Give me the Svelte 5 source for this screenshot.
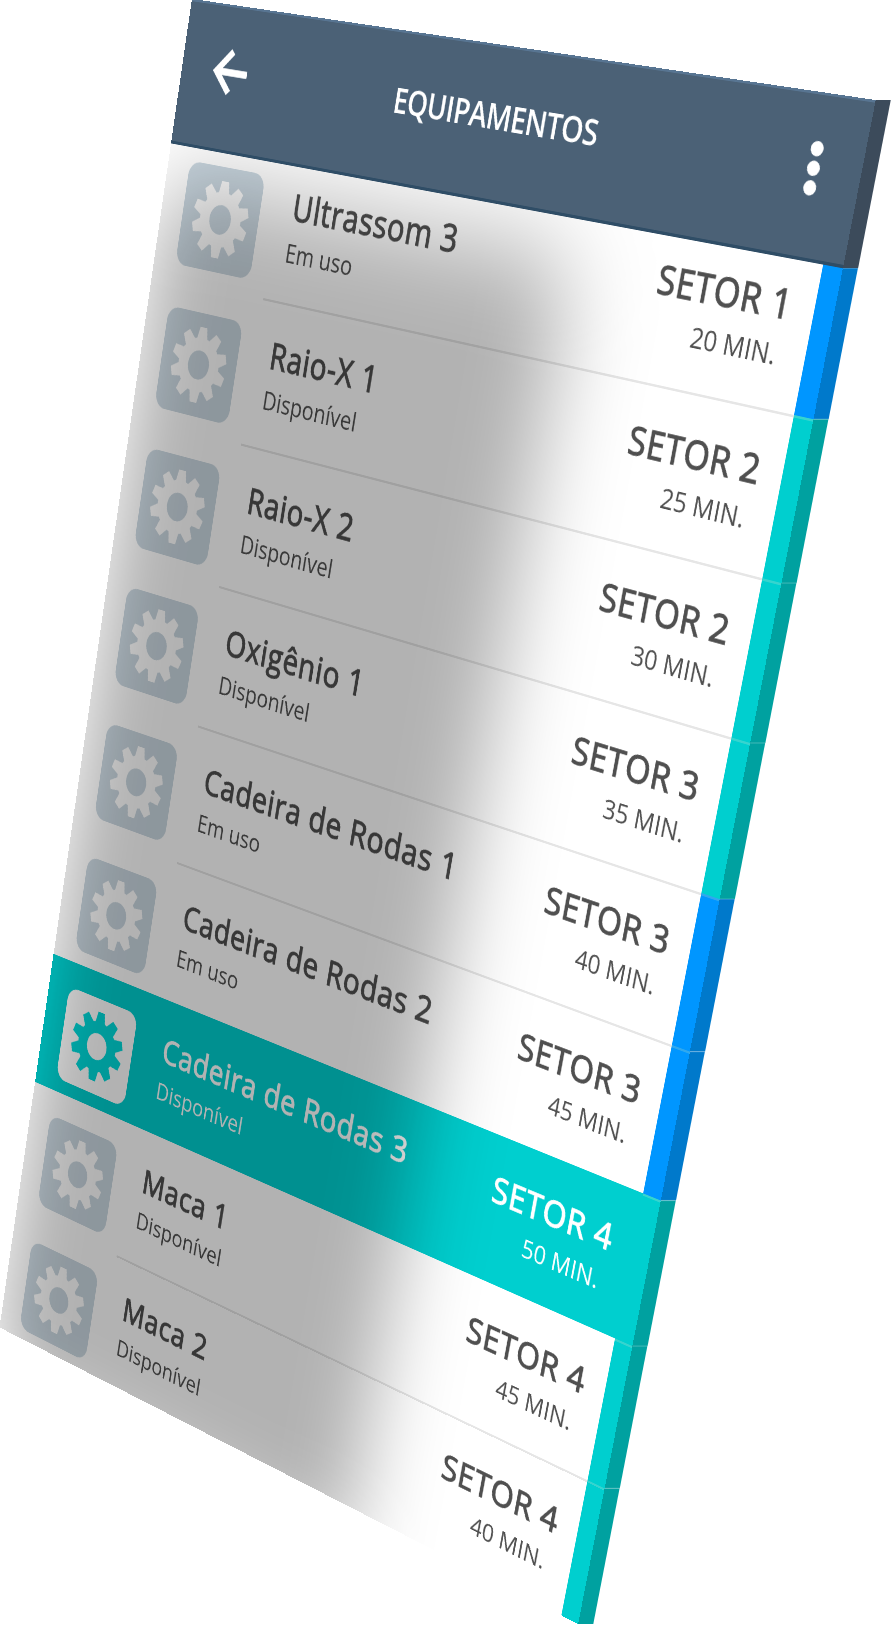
<script>
  const W = 1112;
  const HEAD = 196;
  const LIST = 1775;

  const rows = [
    { name: 'Ultrassom 3', state: 'Em uso', sector: 'SETOR 1', time: '20 MIN.', busy: true },
    { name: 'Raio-X 1', state: 'Disponível', sector: 'SETOR 2', time: '25 MIN.' },
    { name: 'Raio-X 2', state: 'Disponível', sector: 'SETOR 2', time: '30 MIN.' },
    { name: 'Oxigênio 1', state: 'Disponível', sector: 'SETOR 3', time: '35 MIN.' },
    { name: 'Cadeira de Rodas 1', state: 'Em uso', sector: 'SETOR 3', time: '40 MIN.', busy: true },
    { name: 'Cadeira de Rodas 2', state: 'Em uso', sector: 'SETOR 3', time: '45 MIN.', busy: true },
    { name: 'Cadeira de Rodas 3', state: 'Disponível', sector: 'SETOR 4', time: '50 MIN.', selected: true },
    { name: 'Maca 1', state: 'Disponível', sector: 'SETOR 4', time: '45 MIN.' },
    { name: 'Maca 2', state: 'Disponível', sector: 'SETOR 4', time: '40 MIN.' }
  ];

  // Perspective of the panel: the four corners of the list area on the page.
  const [A, B, C, D] = [[171, 143.4], [842.9, 268.3], [578.1, 1624], [-0.5, 1327.4]];
  const d1 = [B[0] - C[0], B[1] - C[1]];
  const d2 = [D[0] - C[0], D[1] - C[1]];
  const s = [A[0] - B[0] + C[0] - D[0], A[1] - B[1] + C[1] - D[1]];
  const det = d1[0] * d2[1] - d2[0] * d1[1];
  const g = (s[0] * d2[1] - d2[0] * s[1]) / det;
  const h = (d1[0] * s[1] - s[0] * d1[1]) / det;
  const line = (p, q, r) => [(q * (1 + g) - p) / W, (r * (1 + h) - p) / LIST, p];
  const mx = line(A[0], B[0], D[0]);
  const my = line(A[1], B[1], D[1]);
  const mw = [g / W, h / LIST, 1];
  for (const m of [mx, my, mw]) m[2] -= m[1] * HEAD;
  const matrix = `matrix3d(${[mx[0], my[0], 0, mw[0], mx[1], my[1], 0, mw[1], 0, 0, 1, 0, mx[2], my[2], 0, mw[2]].join(',')})`;

  // Thickness of the panel, seen along its right edge.
  const edge = (y) => {
    const w = mw[0] * W + mw[1] * y + mw[2];
    return [(mx[0] * W + mx[1] * y + mx[2]) / w, (my[0] * W + my[1] * y + my[2]) / w];
  };
  const side = (y0, y1) => {
    const [x0, a] = edge(y0);
    const [x1, b] = edge(y1);
    return `${x0 - 0.6},${a} ${x0 + 15},${a} ${x1 + 15.2},${b} ${x1 - 0.6},${b}`;
  };
  const cuts = [HEAD, 376, 576, 776, 976, 1176, 1376, 1576, 1776, HEAD + LIST];
  const seams = cuts.slice(1, -1).map(edge);

  const teeth = Array.from({ length: 10 }, (_, i) => i * 36);
</script>

<main>
  <svg class="side" width="891" height="1625" viewBox="0 0 891 1625">
    <polygon points={side(0, HEAD)} fill="#3c4b5b" />
    {#each rows as row, i}
      <polygon points={side(cuts[i], cuts[i + 1])} fill={row.busy ? '#0079cb' : '#00a1a0'} />
    {/each}
    {#each seams as [x, y]}
      <line x1={x} y1={y} x2={x + 15} y2={y} stroke="#ffffff" stroke-opacity="0.2" stroke-width="1.3" />
    {/each}
  </svg>

  <div class="panel" style:transform={matrix}>
    <header>
      <svg class="back" viewBox="0 0 64 64" width="64" height="64">
        <path d="M63 33H7M33 5L6 33l27 27" fill="none" stroke="#fff" stroke-width="9.5" />
      </svg>
      <h1>EQUIPAMENTOS</h1>
      <div class="menu"><i></i><i></i><i></i></div>
    </header>

    <div class="list">
      {#each rows as row}
        <div class="row" class:selected={row.selected}>
          <div class="icon">
            <svg viewBox="-71.5 -71 142 142" width="142" height="142">
              <g class="gear">
                {#each teeth as angle}
                  <path d="M-10 -34L-6.5 -52H6.5L10 -34Z" transform="rotate({angle})" />
                {/each}
                <path fill-rule="evenodd" d="M0 -38a38 38 0 1 1 0 76a38 38 0 1 1 0 -76ZM0 -20a20 20 0 1 0 0 40a20 20 0 1 0 0 -40Z" />
              </g>
            </svg>
          </div>
          <div class="content">
            <div class="left">
              <strong>{row.name}</strong>
              <span>{row.state}</span>
            </div>
            <div class="right">
              <strong>{row.sector}</strong>
              <span>{row.time}</span>
            </div>
          </div>
          <div class="bar" class:busy={row.busy}></div>
        </div>
      {/each}
      <div class="shade"></div>
    </div>
  </div>
</main>

<style>
  :global(body) { background: #fff; }
  main {
    position: relative;
    width: 891px;
    height: 1625px;
    overflow: hidden;
    font-family: 'Open Sans', 'Noto Sans', sans-serif;
  }
  .side { position: absolute; inset: 0; }
  .panel {
    position: absolute;
    left: 0;
    top: 0;
    width: 1112px;
    height: 1971px;
    transform-origin: 0 0;
    background: #fff;
  }
  header {
    box-sizing: border-box;
    height: 196px;
    padding: 0 58px 20px 59px;
    display: flex;
    align-items: center;
    justify-content: space-between;
    background: #4b6176;
    border-top: 3px solid #587592;
    border-bottom: 4px solid #2f4d66;
    color: #fff;
  }
  h1 {
    margin: 1px 0 0 -5px;
    font-size: 44.5px;
    line-height: 60px;
    font-weight: 600;
    letter-spacing: -1px;
  }
  .menu {
    width: 64px;
    display: flex;
    flex-direction: column;
    align-items: flex-end;
    gap: 5px;
  }
  .menu i { width: 18px; height: 18px; border-radius: 50%; background: #fff; }
  .list { position: relative; height: 1775px; overflow: hidden; }
  .row { display: flex; height: 200px; color: #505050; }
  .row:first-child { margin-top: -20px; }
  .icon {
    flex: none;
    width: 142px;
    height: 142px;
    margin: 38px 30px 0 41px;
    border-radius: 20px;
    background: #cbd8e1;
  }
  .icon svg { display: block; }
  .gear { fill: #fff; }
  .content {
    flex: 1;
    display: flex;
    justify-content: space-between;
    padding: 39px 42px 0 28px;
    border-top: 3px solid #e6e6e6;
  }
  .left, .right { display: flex; flex-direction: column; gap: 9px; white-space: nowrap; }
  .right { align-items: flex-end; }
  strong {
    font-size: 49.5px;
    line-height: 60px;
    font-weight: 400;
    letter-spacing: 1.1px;
    -webkit-text-stroke: 1.4px currentColor;
  }
  .right strong { margin-right: -10px; letter-spacing: 1.1px; }
  span { font-size: 35.2px; line-height: 44px; }
  .left span { margin-left: -1px; }
  .bar { width: 28px; background: #00cfcf; border-top: 3px solid #36d4cf; box-sizing: border-box; }
  .bar.busy { background: #0096ff; border-color: #30a8ee; }
  .selected { background: #00cfcf; color: #fff; }
  .selected .icon { background: #fff; }
  .selected .gear { fill: #00dada; }
  .selected .content, .selected + .row .content { border-color: transparent; }
  .shade {
    position: absolute;
    left: 0;
    top: 45px;
    width: 720px;
    height: 1810px;
    border-radius: 60px;
    background: rgba(0, 0, 0, 0.3);
    filter: blur(66px);
  }
</style>
